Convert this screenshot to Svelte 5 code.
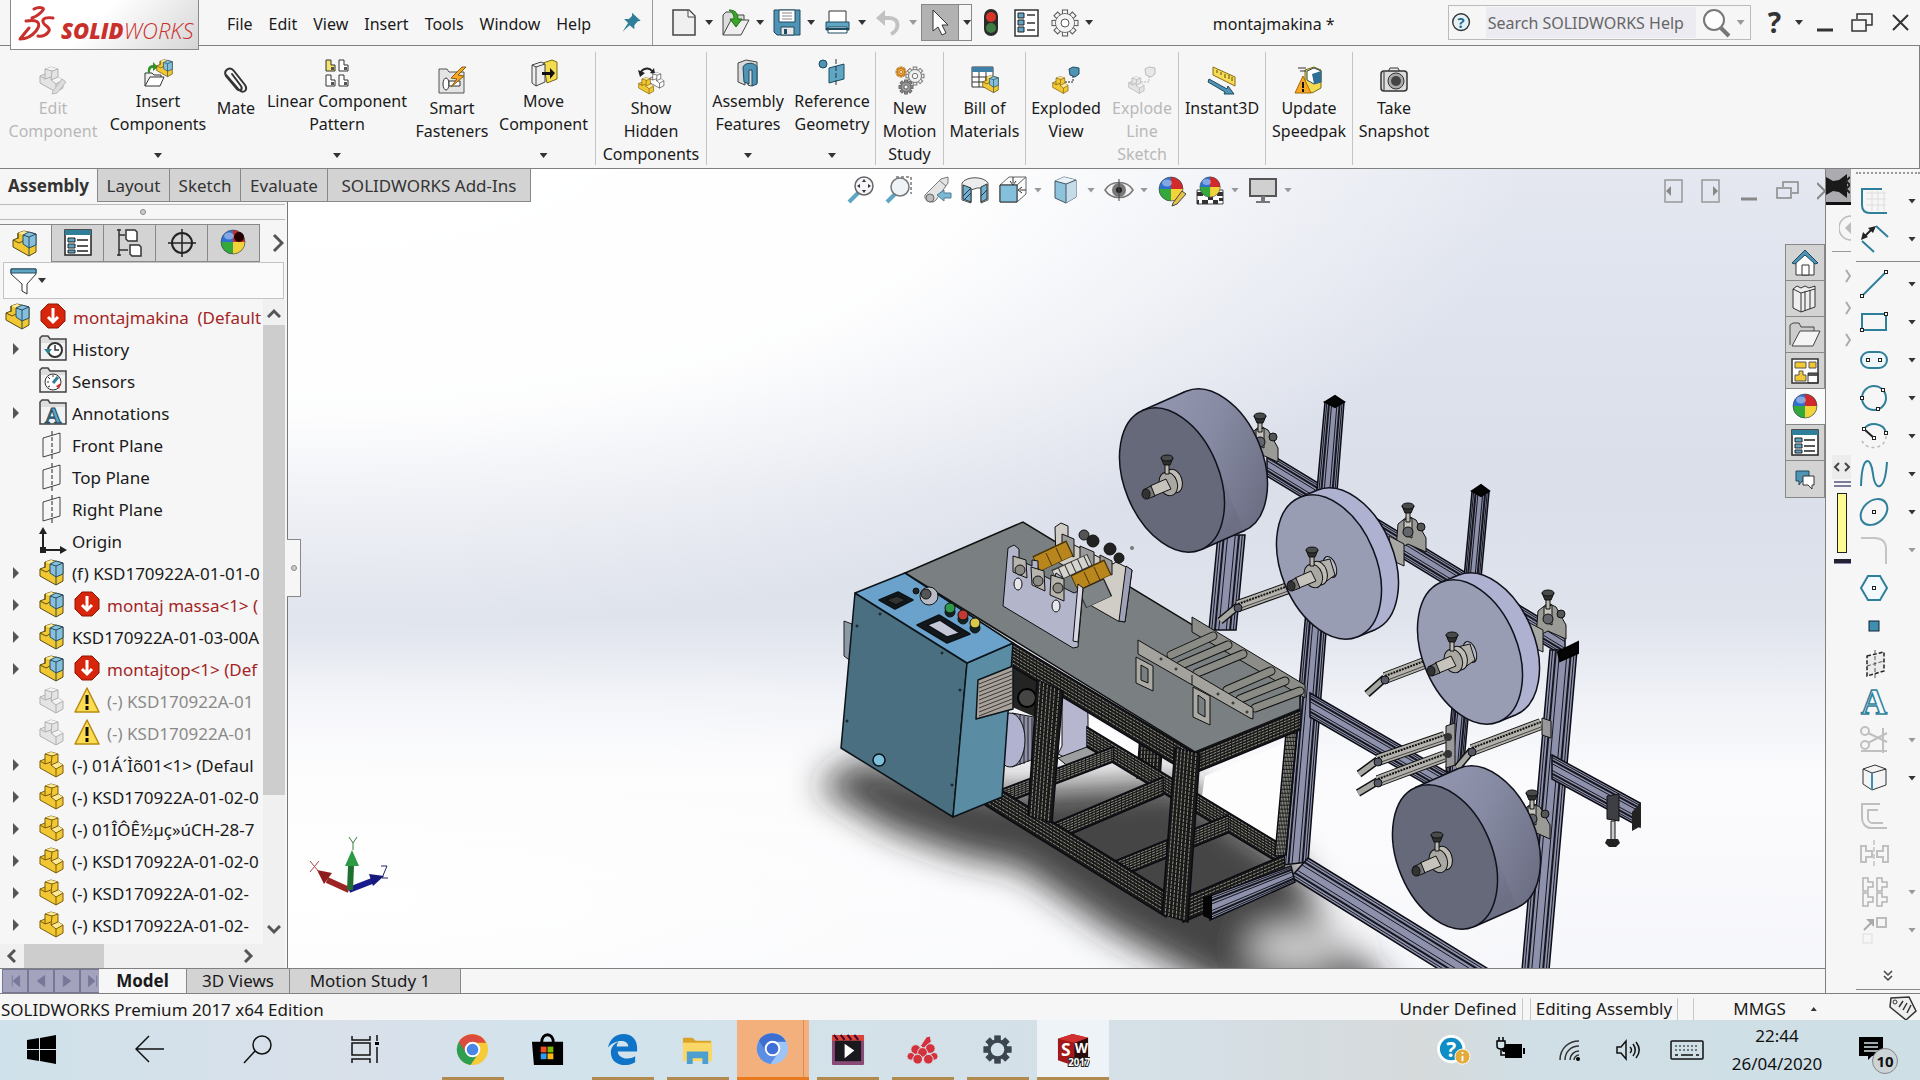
<script>
  const T = '#2f7f9b';
  const part = (m, l, s) =>
    `<path d="M1 10l5-2V3l6-2 7 2v8l5 3v8l-7 4L1 17z" fill="${m}" stroke="${s}" stroke-linejoin="round"/><path d="M6 3l6-2 7 2-6 2zM12 14l7-3 5 3-7 4z" fill="${l}"/><path d="M6 3l7 2 6-2M13 5l-1 9 5 4 7-4M17 18v8M12 14l7-3M1 10l5 3 6-2M6 8v5" fill="none" stroke="${s}"/>`;
  const partY = part('#f2c832', '#fdeb9a', '#7a5c10');
  const partG = part('#e4e4e4', '#f4f4f4', '#b0b0b0');
  const asm =
    `<path d="M1 10l5-2V3l6-2 12 3v18l-7 4L1 17z" fill="#f2c832" stroke="#5a4a10" stroke-linejoin="round"/><path d="M6 3l6-2 6 2-6 2z" fill="#fdeb9a"/><path d="M11 5l6-3 7 2v11l-7 3-6-4z" fill="#86bfdc" stroke="#264e63"/><path d="M11 5l6 2 7-3M17 7v11M17 18v8" fill="none" stroke="#264e63"/><path d="M1 10l6 3 4-2M6 3v6" fill="none" stroke="#5a4a10"/>`;
  const ball =
    `<circle cx="13" cy="13" r="12" fill="#2f6fd0"/><path d="M13 13V1a12 12 0 0 1 12 12z" fill="#d22a2a"/><path d="M13 13h12a12 12 0 0 1-12 12z" fill="#f2d33a"/><path d="M13 13v12A12 12 0 0 1 1 13z" fill="#35a83c"/><circle cx="13" cy="13" r="12" fill="none" stroke="#444" stroke-opacity=".6"/><ellipse cx="9" cy="7" rx="5" ry="3.500" fill="#fff" opacity=".4"/>`;
  const folder = `<path d="M1 25V3l2-2h6l2 3h16v21z" fill="#ddd" stroke="#444" stroke-width="1.500"/><path d="M2 8h24v16H2z" fill="#f2f2f2"/>`;
  const listBox = `<rect x="1" y="1" width="26" height="25" fill="#fff" stroke="#222" stroke-width="1.500"/><path d="M1 1h26v5H1z" fill="${T}"/><path d="M4 9h7v4H4zM4 15h7v4H4zM4 21h7v3H4z" fill="#5fa6c4" stroke="#222"/><path d="M13 11h11M13 17h11M13 22h11" stroke="#222" stroke-width="1.500"/>`;
  const gear = (cx, cy, r, f, s) => {
    let g = '';
    for (let i = 0; i < 8; i++) g += `<rect x="${cx - r * 0.2}" y="${cy - r}" width="${r * 0.4}" height="${r * 0.5}" fill="${f}" stroke="${s}" transform="rotate(${i * 45} ${cx} ${cy})"/>`;
    return g + `<circle cx="${cx}" cy="${cy}" r="${r * 0.72}" fill="${f}" stroke="${s}"/><circle cx="${cx}" cy="${cy}" r="${r * 0.3}" fill="#f6f6f6" stroke="${s}"/>`;
  };
  const stop = `<path d="M8 1h10l7 7v10l-7 7H8l-7-7V8z" fill="#d8260c" stroke="#8d1506"/><path d="M13 5v13M8 14l5 5 5-5" fill="none" stroke="#fff" stroke-width="3"/>`;
  const warn = `<path d="M13 1l12 24H1z" fill="#fbdc52" stroke="#b98a10" stroke-width="1.500" stroke-linejoin="round"/><path d="M13 8v9M13 19v4" stroke="#111" stroke-width="3"/>`;
  const plane = `<path d="M4 7l17-5v19L4 26z" fill="none" stroke="#444"/><path d="M13 0v28" stroke="#222" stroke-dasharray="4 2"/>`;
  const sq = (x, y) => `<rect x="${x - 1.5}" y="${y - 1.5}" width="3" height="3" fill="#fff" stroke="#222"/>`;
  const tee = (x, y, c) => `<path d="M${x} ${y}h5v4h5v5h-5v4h-5z" fill="none" stroke="${c}" stroke-width="1.500"/>`;

  const icons = {
    part: partY, partG, asm, ball, stop, warn, plane, listBox,
    pin: `<path d="M14 1l11 10-4 1-4 5 0 5-6-5-9 8 7-11-5-5h6l4-4z" fill="${T}"/>`,
    new: `<path d="M2 1h16l6 6v19H2z" fill="#f0f0f0" stroke="#444" stroke-width="1.500"/><path d="M17 1v7h7" fill="#fff" stroke="#444"/>`,
    open: `<path d="M1 26V6l3-3h7l2 3h9v5" fill="#ddd" stroke="#444"/><path d="M1 26L9 11h18L19 26z" fill="#eee" stroke="#444"/><path d="M7 1c7 0 9 4 9 9h4l-6 8-6-8h4c0-4-1-6-5-9z" fill="#3ba52b" stroke="#1f6a14"/>`,
    save: `<path d="M1 1h26v25H4l-3-3z" fill="#4f93b5" stroke="#1e4a60"/><path d="M6 1h16v12H6z" fill="#fff" stroke="#1e4a60"/><path d="M9 4h10M9 7h10M9 10h10" stroke="#888"/><path d="M8 18h13v8H8z" fill="#e8e8e8" stroke="#1e4a60"/><path d="M11 20h3v5h-3z" fill="#1e4a60"/>`,
    print: `<path d="M5 2h17v12H5z" fill="#fff" stroke="#333"/><path d="M2 13h23v8H2z" fill="#5fa6c4" stroke="#1e4a60"/><path d="M4 18h19v6H4z" fill="#fff" stroke="#1e4a60"/><path d="M2 20h23" stroke="#1e4a60" stroke-width="2"/>`,
    undo: `<path d="M4 9h10c12 0 10 13 2 16" fill="none" stroke="#c2c2c2" stroke-width="4"/><path d="M1 9l9-8v16z" fill="#c2c2c2"/>`,
    cursor: `<path d="M7 1v21l5-4 4 8 4-2-4-8h6z" fill="#fff" stroke="#333"/>`,
    light: `<rect x="7" y="0" width="14" height="27" rx="7" fill="#2b2b2b"/><circle cx="14" cy="8" r="5" fill="#d8352b"/><circle cx="14" cy="19" r="5" fill="#3f7d45"/>`,
    props: `<rect x="2" y="1" width="23" height="26" fill="#fff" stroke="#333" stroke-width="1.500"/><path d="M5 4h6v5H5zM5 11h6v5H5zM5 18h6v5H5z" fill="#5fa6c4" stroke="#222"/><path d="M14 6h8M14 14h8M14 21h8" stroke="#333" stroke-width="1.500"/>`,
    gear: gear(14, 14, 13, '#f4f4f4', '#555') + `<circle cx="14" cy="14" r="9" fill="#f4f4f4"/><circle cx="14" cy="14" r="4" fill="#fff" stroke="#555"/>`,
    help: `<circle cx="13" cy="13" r="9" fill="#e3f2f8" stroke="#333" stroke-width="1.500"/><text x="13" y="19" font-size="16" font-weight="700" text-anchor="middle" fill="#2a6a86">?</text>`,
    glass: `<circle cx="11" cy="11" r="10" fill="#fdfdfd" stroke="#777" stroke-width="2"/><path d="M18 19l8 8" stroke="#777" stroke-width="4"/>`,
    min: `<path d="M6 21h16" stroke="#333" stroke-width="3"/>`,
    restore: `<path d="M8 10V5h15v11h-6" fill="none" stroke="#333" stroke-width="1.500"/><path d="M3 11h14v11H3z" fill="none" stroke="#333" stroke-width="1.500"/>`,
    close: `<path d="M6 6l15 15M21 6L6 21" stroke="#333" stroke-width="2"/>`,
    editc: partG + `<path d="M14 25l9-12 4 3-9 11-5 1z" fill="#ddd" stroke="#bbb"/>`,
    insert: `<path d="M1 27V14h7l2 2h7v3" fill="#eee" stroke="#333"/><path d="M1 27l5-9h14l-4 9z" fill="#fff" stroke="#333"/><path d="M4 14C3 8 6 6 9 6V3l5 5-5 4V9c-2 0-3 1-3 5z" fill="#35912a"/><g transform="translate(12 0) scale(.68)">${asm}</g>`,
    mate: `<path d="M4 9l13 15c5 4 9 0 6-5L12 5C8 0 1 4 4 10l11 13c3 3 6 0 4-3L10 8" fill="none" stroke="#333" stroke-width="2" stroke-linecap="round"/>`,
    pattern: [[3, 1, '#f3e36b'], [16, 1, '#fff'], [3, 16, '#fff'], [16, 16, '#fff']].map(([x, y, c]) => `<path d="M${x} ${y}h5v5h4v6h-9z" fill="${c}" stroke="#333"/><path d="M${x + 5} ${y + 7}h3v3h-3z" fill="#555"/>`).join(''),
    smart: `<path d="M1 27V3h8l2 3h15v21z" fill="#e4e4e4" stroke="#555"/><ellipse cx="8" cy="18" rx="3" ry="6" fill="#fff" stroke="#333"/><path d="M11 15h11v5H11z" fill="#fff" stroke="#333"/><path d="M24 1l-11 11 6 1-6 8 13-11-6-1 8-8z" fill="#f7a823" stroke="#8a5a10"/>`,
    move: `<path d="M13 4l9-3 5 2v17l-10 4z" fill="#f2dc4f" stroke="#7a6a10"/><path d="M2 6l9-3 4 2v18l-9 4-4-3z" fill="#eee" stroke="#444"/><path d="M6 8l9-3M6 8v19M2 6l4 2" fill="none" stroke="#444"/><path d="M12 13h8V9l5 5-5 6v-4h-8z" fill="#111"/>`,
    show: `<path d="M3 8c2-6 9-7 12-3" fill="none" stroke="#222" stroke-width="2"/><path d="M1 4l2 7 5-4zM13 7l5 1-1-6z" fill="#222"/><g transform="translate(12 6) scale(.62)">${part('#fff', '#fff', '#333')}</g><g transform="translate(1 11) scale(.65)">${partY}</g>`,
    feat: `<path d="M4 4l8-3 11 2v21l-6 3-3-1V12h-3v14l-7-3z" fill="#dadada" stroke="#444"/><path d="M9 8c2-5 12-5 14 0v17l-5 2V11h-3v14l-5-2z" fill="#4f93b5" stroke="#1e4a60"/>`,
    refg: `<circle cx="5" cy="5" r="4" fill="#4f93b5" stroke="#1e4a60"/><path d="M11 9l15-4v15l-15 4z" fill="#5fa6c4" stroke="#1e4a60"/><path d="M18 0v28" stroke="#333" stroke-dasharray="5 2"/>`,
    motion: gear(5, 6, 5, '#f2a93b', '#c07a20') + gear(19, 10, 9, '#f0f0f0', '#777') + gear(10, 21, 7, '#999', '#666'),
    bom: `<path d="M1 1h21v20H1z" fill="#fff" stroke="#333"/><path d="M1 1h21v5H1z" fill="#3f7fa8"/><path d="M1 11h21M1 16h21M8 6v15M15 6v15" stroke="#333"/><g transform="translate(11 9) scale(.68)">${asm}</g>`,
    explode: `<path d="M13 16h8V9" fill="none" stroke="#222" stroke-dasharray="2 1"/><path d="M17 3l4-2 6 1v6l-4 3-5-2z" fill="#4f93b5" stroke="#1e4a60"/><g transform="translate(0 10) scale(.67)">${partY}</g>`,
    explodeG: `<path d="M13 16h8V9" fill="none" stroke="#bbb" stroke-dasharray="2 1"/><path d="M17 3l4-2 6 1v6l-4 3-5-2z" fill="#e8e8e8" stroke="#bbb"/><g transform="translate(0 10) scale(.67)">${partG}</g>`,
    instant: `<path d="M5 1l22 10v9L5 9z" fill="#f7dd55" stroke="#8a6a10"/><path d="M9 4v3M13 6v3M17 8v4M21 9v4M24 11v4" stroke="#5a4a10"/><path d="M1 13l18 10 1-3 6 8-10 0 1-2L0 16z" fill="#4f93b5" stroke="#1e4a60"/>`,
    speed: `<path d="M10 4l9-3 7 3v18l-9 5-7-4z" fill="#f3da52" stroke="#7a6a10"/><path d="M12 5l7-3 7 3v11l-7 2-7-4z" fill="#fff" stroke="#1e4a60"/><path d="M17 8l9-3v11l-7 2z" fill="#2f6f97"/><path d="M3 2h8M5 5h6" stroke="#333"/><path d="M8 10l8 17H0z" fill="#f9a825" stroke="#a66a08"/><path d="M8 16v6M8 23v3" stroke="#111" stroke-width="2"/>`,
    camera: `<path d="M8 6l2-4h8l2 4" fill="#eee" stroke="#333"/><rect x="1" y="5" width="26" height="20" rx="3" fill="#ddd" stroke="#333" stroke-width="1.500"/><circle cx="16" cy="15" r="8" fill="#aaa" stroke="#333"/><circle cx="16" cy="15" r="5" fill="#444"/><path d="M4 6v18" stroke="#333"/>`,
    zfit: `<path d="M11 17l-9 9" stroke="#5fa6c4" stroke-width="4"/><circle cx="17" cy="10" r="9" fill="#f6f6fa" stroke="#666" stroke-width="1.500"/><path d="M17 3l2 3h-4zM17 17l2-3h-4zM10 10l3-2v4zM24 10l-3-2v4z" fill="#333"/>`,
    zarea: `<path d="M11 1h15v17" fill="none" stroke="#333" stroke-dasharray="3 2"/><path d="M10 18l-8 8" stroke="#5fa6c4" stroke-width="4"/><circle cx="15" cy="11" r="9" fill="#eef3f8" stroke="#777" stroke-width="1.500"/>`,
    prev: `<path d="M2 19L18 3l7-2v6L13 24c-4 5-13 0-11-5z" fill="#e4e4e4" stroke="#777"/><path d="M17 5l6 5" stroke="#777"/><circle cx="7" cy="22" r="4" fill="#bbb" stroke="#666"/><path d="M14 19l7-5v3h7v5h-7v3z" fill="#7db8d3" stroke="#4a7f98"/>`,
    section: `<path d="M1 7c4-7 22-7 26 0v17l-7 3V12h-4l-6 2v13l-9-3z" fill="#ececec" stroke="#555"/><path d="M2 9l8 3v14l-8-3zM20 11l6-3v15l-6 3z" fill="#6fb1cf" stroke="#333"/><path d="M2 20l8-8M3 24l7-7M20 20l6-6" stroke="#235"/>`,
    orient: `<path d="M1 9h17v17H1zM1 9l9-8h17l-9 8M27 1v17l-9 8" fill="none" stroke="#666"/><path d="M1 9h17v17H1z" fill="#84bfdb" stroke="#333"/><path d="M14 1v6M11 5l3 4 3-4M27 14h-6M23 11l-4 3 4 3" fill="none" stroke="#333"/>`,
    style: `<path d="M3 5l9-4 12 3v17l-10 6-11-5z" fill="#8fc3db" stroke="#456"/><path d="M14 8l10-4v17l-10 6z" fill="#c4dce8"/><path d="M3 5l9-4 12 3-10 4z" fill="#eaf3f8"/><path d="M3 5l11 3v19M14 8l10-4" fill="none" stroke="#456"/>`,
    eye: `<path d="M0 14C6 4 22 4 28 14 22 24 6 24 0 14z" fill="#f4f4f4" stroke="#777" stroke-width="1.500"/><circle cx="14" cy="14" r="7" fill="#777"/><circle cx="14" cy="14" r="3" fill="#222"/><path d="M14 3v22" stroke="#444"/>`,
    ballPen: ball + `<path d="M15 27l9-12 4 3-9 10-5 2z" fill="#e8c34a" stroke="#444"/>`,
    scene: `<path d="M1 14h26v14H1z" fill="#fff" stroke="#444"/><path d="M1 16h6v4H1zM12 20h5v4h-5zM21 16h6v4h-6zM6 24h6v4H6zM17 24h5v4h-5zM1 24h2v4H1zM23 22h4v3h-4z" fill="#333"/><g transform="translate(3 0) scale(.85)">${ball}</g>`,
    monitor: `<path d="M1 3h26v17H1z" fill="#d0d0d0" stroke="#555" stroke-width="2"/><path d="M12 20h4v5h5v2H7v-2h5z" fill="#777"/>`,
    docL: `<path d="M6 3h17v22H6z" fill="none" stroke="#999" stroke-width="1.500"/><path d="M12 9v10l-5-5z" fill="#888"/>`,
    docR: `<path d="M5 3h17v22H5z" fill="none" stroke="#999" stroke-width="1.500"/><path d="M16 9v10l5-5z" fill="#888"/>`,
    minG: `<path d="M6 22h16" stroke="#888" stroke-width="3"/>`,
    restoreG: `<path d="M10 10V5h15v11h-6" fill="none" stroke="#888" stroke-width="1.500"/><path d="M4 11h14v10H4z" fill="none" stroke="#888" stroke-width="1.500"/>`,
    tree: `<path d="M3 0v27M3 6h6M3 21h9M1 1h4M1 26h4" stroke="#333" stroke-width="1.500"/><path d="M10 1h9l2 2v9H12l-2-2zM14 16h9l2 2v9H16l-2-2z" fill="#fff" stroke="#333" stroke-width="1.500"/>`,
    target: `<circle cx="14" cy="14" r="10" fill="none" stroke="#222" stroke-width="2"/><path d="M14 0v28M0 14h28" stroke="#222" stroke-width="1.500"/>`,
    render: ball + `<circle cx="19" cy="8" r="5" fill="#200"/>`,
    filter: `<path d="M1 2h25v5L17 17v10l-5-3v-7L1 7z" fill="#fff" stroke="#333"/><path d="M1 2h25v4H1z" fill="#5fa6c4" stroke="#1e4a60"/>`,
    history: folder + `<circle cx="16" cy="15" r="7" fill="#fff" stroke="#333" stroke-width="2"/><path d="M16 10v5h4" fill="none" stroke="#333" stroke-width="1.500"/><path d="M5 14h8l-4 5z" fill="${T}"/>`,
    sensors: folder + `<circle cx="14" cy="15" r="8" fill="#fff" stroke="#333"/><path d="M14 16l5-6" stroke="${T}" stroke-width="3"/><path d="M17 19l5-3-2 6z" fill="#c33"/><path d="M14 8v2M8 15h2M9 10l2 2M9 20l2-1" stroke="#333"/>`,
    annot: folder + `<text x="14" y="24" font-size="23" font-weight="700" font-family="Liberation Serif, serif" text-anchor="middle" fill="#5fa6c4" stroke="#1e4a60">A</text>`,
    origin: `<path d="M4 4v19h22" fill="none" stroke="#222" stroke-width="2"/><path d="M4 0l4 7H0zM28 23l-7-4v8zM1 20h6v6H1z" fill="#222"/>`,
    home: `<path d="M5 13v13h18V13L14 4z" fill="#fff" stroke="#333"/><path d="M1 14L14 1l13 13-3 1L14 6 4 15z" fill="#4f93b5" stroke="#1e4a60"/><path d="M11 16h7v10h-7z" fill="#fff" stroke="#333"/>`,
    books: `<path d="M2 4l4-3 4 2 4-2 4 2 6-2v21l-14 5-8-4z" fill="#eee" stroke="#333"/><path d="M2 4l8 4v19M10 8l14-4M14 6v20M19 5v19" fill="none" stroke="#333"/>`,
    folderO: `<path d="M-1 24V4l3-2h6l2 4h13v4" fill="#ccc" stroke="#444"/><path d="M1 25l8-15h20l-7 15z" fill="#f4f4f4" stroke="#444"/>`,
    palette: `<path d="M1 2h26v24H1z" fill="#fff" stroke="#333" stroke-width="1.500"/><path d="M4 5h11v6H4zM18 5h7v6h-7zM8 14h4v4h3v6H4v-6h4z" fill="#f2c832" stroke="#555"/><path d="M17 16h10v3H17z" fill="#555"/><path d="M17 16h10v10H17z" fill="none" stroke="#333"/>`,
    chat: `<path d="M5 6h13v10h-7l-3 4v-4H5z" fill="#4f93b5" stroke="#1e4a60"/><path d="M12 11h11v9h-2v4l-4-4h-5z" fill="#fff" stroke="#333"/>`,
    sk1: `<path d="M6 6h20M6 12h20M6 18h20M12 4v20M18 4v20M24 4v20" stroke="#ddd"/><path d="M22 2H2v16c0 6 4 8 8 8h17" fill="none" stroke="${T}" stroke-width="2"/>`,
    sk2: `<path d="M2 16l12 11M16 1l12 11" stroke="${T}" stroke-width="2"/><path d="M4 12L13 3" stroke="#222" stroke-width="2"/><path d="M1 15l2-8 5 5zM16 1l-8 2 5 5z" fill="#222"/>`,
    line: `<path d="M2 26L26 2" stroke="${T}" stroke-width="2"/>` + sq(2, 26) + sq(26, 2),
    rect: `<path d="M2 6h24v16H2z" fill="none" stroke="${T}" stroke-width="2"/>` + sq(2, 22) + sq(26, 6),
    slot: `<rect x="1" y="6" width="26" height="16" rx="8" fill="#eef6fa" stroke="${T}" stroke-width="2"/>` + sq(8, 14) + sq(20, 14),
    circ: `<circle cx="14" cy="14" r="12" fill="none" stroke="${T}" stroke-width="2"/>` + sq(2, 14) + sq(23, 6) + sq(18, 25),
    arc: `<path d="M4 7c6-8 20-6 22 4" fill="none" stroke="${T}" stroke-width="2"/><path d="M26 14c0 14-22 16-25 2" fill="none" stroke="#bbb" stroke-width="1.500" stroke-dasharray="3 3"/><path d="M4 7l10 9" stroke="#222" stroke-width="2"/>` + sq(4, 7) + sq(14, 16) + sq(26, 11),
    spline: `<path d="M1 26C2-6 11-4 13 14s12 18 14-12" fill="none" stroke="${T}" stroke-width="2"/>`,
    ell: `<ellipse cx="14" cy="14" rx="15" ry="11" transform="rotate(-42 14 14)" fill="none" stroke="${T}" stroke-width="2"/>` + sq(14, 14),
    fillet: `<path d="M1 2h13c9 0 12 5 12 11v15" fill="none" stroke="#c4c4c4" stroke-width="2"/>`,
    hex: `<path d="M8 2h12l7 12-7 12H8L1 14z" fill="#f2fafd" stroke="${T}" stroke-width="2"/>` + sq(14, 14),
    point: `<rect x="9" y="9" width="10" height="10" fill="#3f8fae" stroke="#123"/>`,
    cplane: `<path d="M7 6l17-4v19L7 26z" fill="#ececec" stroke="#222" stroke-width="1.500" stroke-dasharray="4 2"/><path d="M7 16l17-5M15 0v28" stroke="#555" stroke-dasharray="4 2"/>`,
    txt: `<text x="14" y="26" font-size="36" font-weight="700" font-family="Liberation Serif, serif" text-anchor="middle" fill="#f2fafd" stroke="${T}" stroke-width="1.500">A</text>`,
    trim: `<circle cx="5" cy="5" r="4" fill="none" stroke="#c0c0c0" stroke-width="2"/><circle cx="5" cy="19" r="4" fill="none" stroke="#c0c0c0" stroke-width="2"/><path d="M8 7l19 9M8 17L27 7M23 2v25M1 25h26" stroke="#c0c0c0" stroke-width="2"/>`,
    cube: `<path d="M3 5l12-4 11 4v16l-14 5-9-6z" fill="#f4f4f4" stroke="#333"/><path d="M3 5l9 4 14-4" fill="none" stroke="#333"/><path d="M12 9v17" stroke="#3f8fae" stroke-width="2"/>`,
    offset: `<path d="M20 2H2v14c0 6 4 10 9 10h16M18 8H8v8c0 3 2 5 4 5h11" fill="none" stroke="#c0c0c0" stroke-width="2"/>`,
    mirror: `<path d="M1 6h5v5h6v6H6v5H1zM28 6h-5v5h-6v6h6v5h5z" fill="none" stroke="#c0c0c0" stroke-width="2"/><path d="M14 0v28" stroke="#aaa" stroke-dasharray="5 2"/>`,
    array: tee(3, 0, '#b4b4b4') + tee(17, 0, '#b4b4b4') + tee(3, 15, '#b4b4b4') + tee(17, 15, '#b4b4b4'),
    movee: `<path d="M4 14L12 6" stroke="#aaa" stroke-width="2"/><path d="M14 3v8l-8-8z" fill="#aaa"/><path d="M17 2h9v9h-9z" fill="none" stroke="#bbb" stroke-width="2"/><path d="M3 18h9v9H3z" fill="none" stroke="#ddd"/>`,
    tag: `<path d="M3 3l18-1 7 14-10 9L2 12z" fill="#eee" stroke="#333" stroke-width="1.500"/><circle cx="7" cy="7" r="2" fill="none" stroke="#333"/><path d="M11 12l4-6M15 15l4-7M19 18l4-8" stroke="#333" stroke-width="1.500"/>`,
    windows: `<path d="M0 5l12-2v11H0zM13 3l16-3v14H13zM0 15h12v11L0 24zM13 15h16v14l-16-3z" fill="#000"/>`,
    back: `<path d="M29 14H1M14 1L1 14l13 13" fill="none" stroke="#111" stroke-width="1.500"/>`,
    find: `<circle cx="19" cy="10" r="9" fill="none" stroke="#111" stroke-width="1.500"/><path d="M12 16L1 28" stroke="#111" stroke-width="1.500"/>`,
    tview: `<path d="M1 1v4h18V1M1 28v-4h18v4M1 8h18v12H1zM26 0v6M26 12v16" fill="none" stroke="#111" stroke-width="1.500"/><path d="M24 7h4v3h-4z"/>`,
    chrome: `<circle cx="16" cy="16" r="16" fill="#f7cb38"/><path d="M2 8a16 16 0 0 0 12 24l8-12-6-4z" fill="#2f9e50"/><path d="M2 8a16 16 0 0 1 28 1H16l-6 11z" fill="#dd4b3e"/><circle cx="16" cy="16" r="7" fill="#4a86e8" stroke="#fff" stroke-width="2"/>`,
    chromium: `<circle cx="16" cy="16" r="16" fill="#9cc4f6"/><path d="M2 8a16 16 0 0 0 12 24l8-12-6-4z" fill="#5b8fe6"/><path d="M2 8a16 16 0 0 1 28 1H16l-6 11z" fill="#3c6fd0"/><circle cx="16" cy="16" r="7" fill="#3f6fd8" stroke="#fff" stroke-width="2"/>`,
    store: `<path d="M10 9c0-11 12-11 12 0" fill="none" stroke="#000" stroke-width="3"/><path d="M0 8h32v24H2z" fill="#000"/><path d="M9 13h6v6H9z" fill="#f04e23"/><path d="M16 13h6v6h-6z" fill="#7fb900"/><path d="M9 20h6v6H9z" fill="#2a9df4"/><path d="M16 20h6v6h-6z" fill="#fdb813"/>`,
    edge: `<path d="M1 14C3 5 9 0 17 0c9 0 14 6 14 14v4H11c1 8 12 9 18 5v6c-10 6-25 3-25-10 0-5 3-9 8-11-1 1-2 3-2 5h12c0-8-14-8-21 1z" fill="#0f74c8"/>`,
    explorer: `<path d="M1 4h10l3 3h16v5H1z" fill="#d9a32a"/><path d="M1 9h30v19H1z" fill="#fbd768"/><path d="M5 31V18h22v13h-6v-6H11v6z" fill="#4d9fd0"/>`,
    film: `<rect x="0" y="1" width="33" height="31" rx="1" fill="#8a4a78"/><path d="M0 1h33v6H0z" fill="#d8443a"/><path d="M2 1l4 5M9 1l4 5M16 1l4 5M23 1l4 5" stroke="#402" stroke-width="2"/><path d="M3 7h27v21H3z" fill="#1a1a1e"/><path d="M13 10l10 7-10 8z" fill="#fff"/>`,
    paw: `<g fill="#d4313c" stroke="#d4e2ea"><path d="M14 12l6-9 4-1 1 6-8 7z"/><circle cx="9" cy="16" r="5"/><circle cx="24" cy="15" r="5"/><circle cx="16" cy="19" r="5"/><circle cx="4" cy="23" r="4"/><circle cx="28" cy="23" r="4"/><circle cx="11" cy="26" r="5"/><circle cx="22" cy="26" r="5"/></g>`,
    cog: gear(16, 16, 14, '#3c4650', '#3c4650') + `<circle cx="16" cy="16" r="7" fill="#d4e2ea"/>`,
    sw: `<path d="M1 5L16 0l16 4v22l-14 7L1 27z" fill="#a31818"/><path d="M18 9l14-5v22l-14 7z" fill="#2a0c0c"/><path d="M1 5l17 4 14-5-16-4z" fill="#d03030"/><text x="9" y="23" font-size="18" font-weight="700" text-anchor="middle" fill="#fff">S</text><text x="25" y="20" font-size="14" font-weight="700" text-anchor="middle" fill="#fff">W</text><text x="23" y="33" font-size="10" font-weight="700" text-anchor="middle" fill="#fff" stroke="#222" stroke-width="2" paint-order="stroke">2017</text>`,
    qhelp: `<circle cx="14" cy="14" r="15" fill="#fff"/><circle cx="14" cy="14" r="12" fill="#0f8dc4"/><text x="14" y="22" font-size="22" font-weight="700" text-anchor="middle" fill="#fff">?</text><circle cx="26" cy="22" r="8" fill="#e2ab3a" stroke="#fff"/><path d="M26 17v2M26 21v6" stroke="#fff" stroke-width="2"/>`,
    battery: `<path d="M6 8h20v14H9V16H6z" fill="#000"/><path d="M27 12h2v6h-2z"/><path d="M1 5h8v5c0 4-8 4-8 0zM3 1v4M7 1v4M5 13v6h4" fill="#d4e2ea" stroke="#000" stroke-width="1.500"/>`,
    wifi: `<g fill="none" stroke="#333" stroke-width="1.500"><path d="M5 24C5 12 14 5 24 5M10 24c0-8 6-14 14-14M15 24c0-5 4-9 9-9M19 24c0-2 2-5 5-5"/></g><circle cx="23" cy="23" r="2"/>`,
    vol: `<path d="M3 11h4l5-6v18l-5-6H3z" fill="none" stroke="#111" stroke-width="1.500"/><path d="M16 11c2 2 2 4 0 6M19 8c3 4 3 8 0 12M22 6c4 5 4 11 0 16" fill="none" stroke="#111" stroke-width="1.500"/>`,
    keys: `<rect x="1" y="5" width="32" height="18" rx="1" fill="none" stroke="#111" stroke-width="1.500"/><path d="M5 10h24M5 14h24" stroke="#111" stroke-dasharray="2 2"/><path d="M5 19h3M11 19h12M26 19h3" stroke="#111" stroke-width="1.500"/>`,
    note: `<path d="M1 1h24v19H14l-4 4v-4H1z"/><path d="M6 7h14M6 11h14M6 15h14" stroke="#d4e2ea" stroke-width="1.500"/>`
  };

  const menus = ['File', 'Edit', 'View', 'Insert', 'Tools', 'Window', 'Help'];
  const quick = [['new', 1], ['open', 1], ['save', 1], ['print', 1], ['undo', 2]];
  const ribbon = [
    [
      { i: 'editc', t: ['Edit', 'Component'], w: 106, off: 1 },
      { i: 'insert', t: ['Insert', 'Components'], w: 104, a: 1 },
      { i: 'mate', t: ['Mate'], w: 52 },
      { i: 'pattern', t: ['Linear Component', 'Pattern'], w: 150, a: 1 },
      { i: 'smart', t: ['Smart', 'Fasteners'], w: 80 },
      { i: 'move', t: ['Move', 'Component'], w: 103, a: 1 }
    ],
    [{ i: 'show', t: ['Show', 'Hidden', 'Components'], w: 110 }],
    [{ i: 'feat', t: ['Assembly', 'Features'], w: 82, a: 1 }, { i: 'refg', t: ['Reference', 'Geometry'], w: 86, a: 1 }],
    [{ i: 'motion', t: ['New', 'Motion', 'Study'], w: 67 }],
    [{ i: 'bom', t: ['Bill of', 'Materials'], w: 81 }],
    [{ i: 'explode', t: ['Exploded', 'View'], w: 80 }, { i: 'explodeG', t: ['Explode', 'Line', 'Sketch'], w: 72, off: 1 }],
    [{ i: 'instant', t: ['Instant3D'], w: 86 }],
    [{ i: 'speed', t: ['Update', 'Speedpak'], w: 86 }],
    [{ i: 'camera', t: ['Take', 'Snapshot'], w: 82 }]
  ];
  const cmdTabs = [['Assembly', 98], ['Layout', 72], ['Sketch', 71], ['Evaluate', 87], ['SOLIDWORKS Add-Ins', 203]];
  const panelTabs = ['asm', 'listBox', 'tree', 'target', 'render'];
  const tree = [
    { i: 'history', t: 'History', a: 1 },
    { i: 'sensors', t: 'Sensors' },
    { i: 'annot', t: 'Annotations', a: 1 },
    { i: 'plane', t: 'Front Plane' },
    { i: 'plane', t: 'Top Plane' },
    { i: 'plane', t: 'Right Plane' },
    { i: 'origin', t: 'Origin' },
    { i: 'asm', t: '(f) KSD170922A-01-01-0', a: 1 },
    { i: 'asm', s: 'stop', t: 'montaj massa<1> (', a: 1, c: 'err' },
    { i: 'asm', t: 'KSD170922A-01-03-00A', a: 1 },
    { i: 'asm', s: 'stop', t: 'montajtop<1> (Def', a: 1, c: 'err' },
    { i: 'partG', s: 'warn', t: '(-) KSD170922A-01', c: 'dim' },
    { i: 'partG', s: 'warn', t: '(-) KSD170922A-01', c: 'dim' },
    { i: 'part', t: '(-) 01Á´Ìõ01<1> (Defaul', a: 1 },
    { i: 'part', t: '(-) KSD170922A-01-02-0', a: 1 },
    { i: 'part', t: '(-) 01ÎÔÊ½µç»úCH-28-7', a: 1 },
    { i: 'part', t: '(-) KSD170922A-01-02-0', a: 1 },
    { i: 'part', t: '(-) KSD170922A-01-02-', a: 1 },
    { i: 'part', t: '(-) KSD170922A-01-02-', a: 1 }
  ];
  const views = [['zfit'], ['zarea'], ['prev'], ['section'], ['orient', 1], ['style', 1], ['eye', 1], ['ballPen'], ['scene', 1], ['monitor', 1]];
  const pane = ['home', 'books', 'folderO', 'palette', 'ball', 'listBox', 'chat'];
  const sketch = [['line', 1], ['rect', 1], ['slot', 1], ['circ', 1], ['arc', 1], ['spline', 1], ['ell', 1], ['fillet', 2], ['hex'], ['point'], ['cplane'], ['txt'], ['trim', 2], ['cube', 1], ['offset'], ['mirror'], ['array', 2], ['movee', 2]];
  const nav = ['windows', 'back', 'find', 'tview'];
  const apps = [['chrome', 'run'], ['store', ''], ['edge', 'run'], ['explorer', 'run'], ['chromium', 'hot'], ['film', 'run'], ['paw', 'run'], ['cog', 'run'], ['sw', 'run cur']];

  // Aluminium profile: quad between edge (x1,y1)-(x2,y2) and the same edge shifted by (dx,dy)
  function beam(x1, y1, x2, y2, dx, dy, dark = false, ex = dx, ey = dy) {
    const fs = dark ? [0.12, 0.26, 0.4, 0.54, 0.68, 0.84] : [0.1, 0.22, 0.36, 0.64, 0.78, 0.9];
    return {
      pts: `${x1},${y1} ${x2},${y2} ${x2 + ex},${y2 + ey} ${x1 + dx},${y1 + dy}`,
      dark,
      lines: fs.map((f, i) => ({ x1: x1 + dx * f, y1: y1 + dy * f, x2: x2 + ex * f, y2: y2 + ey * f, w: !dark && (i === 1 || i === 4) ? 2 : 1 }))
    };
  }
  const rear = [
    beam(1218, 535, 1209, 630, 27, 0),
    beam(1267, 452, 1565, 633, 0, 24),
    beam(1325, 402, 1283, 865, 19, 0, false, 25, -3),
    beam(1472, 492, 1446, 772, 17, 0),
    beam(1310, 693, 1450, 774, 0, 24),
    beam(1550, 650, 1522, 970, 27, 0),
    beam(1552, 755, 1640, 803, 0, 24),
    beam(1308, 858, 1490, 970, -17, 19, false, -50, 0)
  ];
  const frame = [
    beam(1140, 735, 1137, 778, 23, 0, true),
    beam(1087, 727, 1284, 846, 0, 20, true),
    beam(1000, 790, 1113, 747, 0, 15, true),
    beam(1052, 824, 1163, 777, 0, 18, true),
    beam(1115, 861, 1228, 815, 0, 18, true),
    beam(1287, 722, 1275, 855, 11, 0, true),
    beam(1183, 898, 1284, 855, 0, 24, true),
    beam(985, 780, 1166, 892, 0, 25, true),
    beam(1013, 643, 1195, 753, 0, 24, true),
    beam(1195, 753, 1300, 710, 0, 20, true),
    beam(1037, 680, 1028, 815, 26, 12, true, 24, 8),
    beam(1175, 748, 1162, 914, 25, 6, true, 26, 8)
  ];
  const foot = beam(1210, 896, 1291, 866, 0, 24, false, 4, 16);
  const rollers = [[1213, 636, 1171, 655], [1228, 645, 1181, 665], [1243, 654, 1197, 673], [1271, 671, 1227, 690], [1285, 681, 1240, 699], [1300, 691, 1255, 708]];
  const arms = [[1238, 606, 1291, 587, 1220, 621], [1385, 678, 1427, 662, 1367, 694], [1378, 760, 1445, 737, 1359, 774], [1378, 781, 1445, 756, 1358, 793], [1472, 750, 1541, 724, 1457, 768]];
  const A = 75.5, B = 47.4, R = (-22.5 * Math.PI) / 180;
  function reel(cx, cy, dx, dy, face, side) {
    const u = [Math.cos(R), Math.sin(R)], v = [-Math.sin(R), Math.cos(R)];
    const n = [-dy, dx];
    const t = Math.atan2(A * (v[0] * n[0] + v[1] * n[1]), B * (u[0] * n[0] + u[1] * n[1]));
    const px = B * Math.cos(t) * u[0] + A * Math.sin(t) * v[0];
    const py = B * Math.cos(t) * u[1] + A * Math.sin(t) * v[1];
    return { cx, cy, dx, dy, face, side, px, py };
  }
  const reels = [
    { ...reel(1172, 480, 43, -19, '#666979', 'url(#drum)'), hx: 1168, hy: 483 },
    { ...reel(1329, 567, 17, -7, '#989db4', '#aeb1d0'), hx: 1313, hy: 575 },
    { ...reel(1470, 652, 17, -7, '#989db4', '#aeb1d0'), hx: 1453, hy: 660 },
    { ...reel(1445, 857, 43, -19, '#666979', 'url(#drum)'), hx: 1438, hy: 860 }
  ];
  const mounts = [[1260, 418], [1408, 508], [1548, 595], [1532, 795]];
</script>

{#snippet icon(name, size = 28)}
  <svg class="ic" width={size} height={size} viewBox="0 0 28 28" aria-hidden="true">{@html icons[name]}</svg>
{/snippet}
{#snippet caret(kind = 1)}
  <span class="caret" class:pale={kind === 2}></span>
{/snippet}
{#snippet profile(b)}
  <polygon points={b.pts} fill={b.dark ? '#191918' : '#8d91ab'} stroke="#0c0c14" stroke-width="1.500" />
  {#each b.lines as l}
    <line x1={l.x1} y1={l.y1} x2={l.x2} y2={l.y2} stroke={b.dark ? '#8f8f88' : '#16161f'} stroke-width={l.w} stroke-dasharray={b.dark ? '3 1' : 'none'} />
  {/each}
{/snippet}
{#snippet knob(x, y)}
  <path d="M{x - 2} {y}h4v14h-4z" fill="#bbb9b2" stroke="#111" />
  <path d="M{x - 6} {y - 2}l3 7h6l3-7z" fill="#2d302f" stroke="#111" />
  <ellipse cx={x} cy={y - 2} rx="6" ry="3" fill="#474b4a" stroke="#111" />
{/snippet}

<div class="app">
  <header class="title">
    <div class="logo">
      <svg width="38" height="38" viewBox="0 0 38 38" aria-hidden="true">
        <g fill="none" stroke="#c9302c" stroke-width="3" stroke-linecap="round" stroke-linejoin="round">
          <path d="M16 3c4-2 11-2 9 1s-6 6-11 8" />
          <path d="M8 15c12-2 16 2 10 10-4 5-10 8-16 8l9-11" />
          <path d="M35 12c-6-1-11 0-10 4s8 5 6 9-7 6-11 5" />
        </g>
      </svg>
      <span class="brand"><b>SOLID</b>WORKS</span>
    </div>
    <nav class="menus">
      {#each menus as m}<button>{m}</button>{/each}
    </nav>
    <button class="pin" aria-label="Pin menu">{@render icon('pin', 22)}</button>
    <div class="quick">
      {#each quick as [n, k]}
        <button aria-label={n}>{@render icon(n)}{@render caret(k)}</button>
      {/each}
      <button class="select" aria-label="Select"><span>{@render icon('cursor')}</span>{@render caret()}</button>
      <button class="solo" aria-label="Rebuild">{@render icon('light')}</button>
      <button class="solo" aria-label="File properties">{@render icon('props')}</button>
      <button aria-label="Options">{@render icon('gear')}{@render caret()}</button>
    </div>
    <span class="doc">montajmakina *</span>
    <div class="search">
      {@render icon('help', 26)}
      <input type="text" placeholder="Search SOLIDWORKS Help" aria-label="Search SOLIDWORKS Help" />
      {@render icon('glass')}{@render caret(2)}
    </div>
    <button class="q" aria-label="Help">?{@render caret()}</button>
    <div class="win">
      <button aria-label="Minimize">{@render icon('min')}</button>
      <button aria-label="Restore">{@render icon('restore')}</button>
      <button aria-label="Close">{@render icon('close')}</button>
    </div>
  </header>

  <section class="ribbon">
    {#each ribbon as g}
      <div class="group">
        {#each g as b}
          <button class="rb" class:drop={b.a} class:off={b.off} style:width="{b.w}px">
            {@render icon(b.i)}
            {#each b.t as line}<span>{line}</span>{/each}
            {#if b.a}<i>{@render caret()}</i>{/if}
          </button>
        {/each}
      </div>
    {/each}
  </section>

  <main>
    <div class="work">
      <svg class="scene" viewBox="288 169 1537 799" preserveAspectRatio="xMaxYMid slice" aria-label="montajmakina model">
        <defs>
          <linearGradient id="sky" x2="0" y2="1">
            <stop offset="0" stop-color="#eceef4" /><stop offset=".25" stop-color="#e0e4ee" /><stop offset=".45" stop-color="#dbdfea" /><stop offset=".57" stop-color="#dfe3ec" />
            <stop offset=".65" stop-color="#f0f2f7" /><stop offset=".72" stop-color="#fbfbfd" /><stop offset="1" stop-color="#f3f4f9" />
          </linearGradient>
          <radialGradient id="glow" gradientUnits="userSpaceOnUse" cx="330" cy="150" r="1200" gradientTransform="translate(0 90) scale(1 .4)">
            <stop offset="0" stop-color="#fff" /><stop offset=".55" stop-color="#fff" stop-opacity=".95" /><stop offset="1" stop-color="#fff" stop-opacity="0" />
          </radialGradient>
          <radialGradient id="low" gradientUnits="userSpaceOnUse" cx="330" cy="900" r="1300" gradientTransform="translate(0 720) scale(1 .2)">
            <stop offset="0" stop-color="#fff" /><stop offset="1" stop-color="#fff" stop-opacity="0" />
          </radialGradient>
          <linearGradient id="drum" x2=".6" y2="1"><stop offset="0" stop-color="#9498b1" /><stop offset=".5" stop-color="#868aa2" /><stop offset="1" stop-color="#6d7085" /></linearGradient>
          <filter id="soft" x="-30%" y="-30%" width="160%" height="160%"><feGaussianBlur stdDeviation="17" /></filter>
        </defs>
        <rect x="0" y="0" width="1920" height="1080" fill="url(#sky)" />
        <rect x="0" y="0" width="1920" height="1080" fill="url(#glow)" />
        <rect x="0" y="0" width="1920" height="1080" fill="url(#low)" />
        <g filter="url(#soft)">
          <path d="M815 785L860 760 1000 790 1180 780 1290 860 1330 930 1400 1000 1240 1000 1110 930 1020 868 960 855 890 830z" fill="#262626" opacity=".85" />
          <ellipse cx="1296" cy="948" rx="44" ry="18" fill="#fff" opacity=".8" />
        </g>
        <path d="M1084 712l55 34v12l-52-30zM1205 776l82-34-10 100-75-46z" fill="#fdfdfe" />
        {#each rear as b}{@render profile(b)}{/each}
        <path d="M1325 402l10-6 9 6-9 5zM1472 491l9-6 8 6-8 5zM1558 652l20-10v11l-18 8z" fill="#050505" stroke="#000" stroke-width="2" />
        <path d="M1632 812l9-10v24l-9 5z" fill="#222" />
        {#each mounts as [x, y]}
          <path d="M{x - 10} {y + 16}l10-8 8 4 10 18v14l-18-8-12 6z" fill="#9a9b97" stroke="#111" />
          <path d="M{x - 4} {y + 12}l8-2v20l-8-4z" fill="#c4c3bd" stroke="#111" />
          <ellipse cx={x + 13} cy={y + 19} rx="4" ry="4" fill="#555" stroke="#111" />
          <circle cx={x} cy={y + 24} r="5" fill="#63656c" stroke="#111" />
          {@render knob(x, y)}
        {/each}
        <path d="M1389 536l15 8v22l-13-6zM1528 622l15 8v22l-13-6z" fill="#a7a8a3" stroke="#111" />
        <path d="M1607 796l12-2v27l-12-2z" fill="#3d3f45" stroke="#111" /><path d="M1611 821h4v20h-4z" fill="#ccc" stroke="#111" />
        <path d="M1607 839h11l2 4-4 4h-7l-4-4z" fill="#222" />
        {#each arms as [x1, y1, x2, y2, tx, ty]}
          <line {x1} {y1} x2={tx} y2={ty} stroke="#111" stroke-width="8" /><line {x1} {y1} x2={tx} y2={ty} stroke="#a7a7a4" stroke-width="5" />
          <line {x1} {y1} {x2} {y2} stroke="#111" stroke-width="12" /><line {x1} {y1} {x2} {y2} stroke="#b3b1ab" stroke-width="10" />
          <line {x1} y1={y1 - 2} {x2} y2={y2 - 2} stroke="#111" stroke-width="2" stroke-dasharray="2 1" /><line {x1} y1={y1 + 3} {x2} y2={y2 + 3} stroke="#444" />
          <circle cx={x1} cy={y1 + 2} r="4" fill="#555a66" stroke="#111" />
        {/each}
        <path d="M1446 726l9-3v42l-9 3zM1542 718l9 3v17l-9-3z" fill="#999" stroke="#111" /><circle cx="1448" cy="737" r="4" fill="#333" /><circle cx="1448" cy="754" r="4" fill="#333" />
        {#each reels as r, n}
          <g stroke="#11111c" stroke-width="1.500">
            <ellipse cx={r.cx + r.dx} cy={r.cy + r.dy} rx={B} ry={A} transform="rotate(-22.5 {r.cx + r.dx} {r.cy + r.dy})" fill={r.side} />
            <polygon stroke="none" fill={r.side} points="{r.cx + r.px},{r.cy + r.py} {r.cx + r.px + r.dx},{r.cy + r.py + r.dy} {r.cx - r.px + r.dx},{r.cy - r.py + r.dy} {r.cx - r.px},{r.cy - r.py}" />
            <path d="M{r.cx + r.px} {r.cy + r.py}l{r.dx} {r.dy}M{r.cx - r.px} {r.cy - r.py}l{r.dx} {r.dy}" />
            <ellipse cx={r.cx} cy={r.cy} rx={B} ry={A} transform="rotate(-22.5 {r.cx} {r.cy})" fill={r.face} />
          </g>
          <g transform="translate({r.hx} {r.hy})" stroke="#111">
            {#if n === 1 || n === 2}
              <ellipse cx="17" cy="-8" rx="6" ry="11" transform="rotate(-20 17 -8)" fill="#b7bac9" /><path d="M0-12L17-16 22 0 4 13z" fill="#b3b1ab" />
            {/if}
            <ellipse cx="6" cy="-2" rx="8" ry="12" transform="rotate(-18 6 -2)" fill="#bfbdb6" />
            <ellipse cx="0" cy="1" rx="9" ry="12" transform="rotate(-18)" fill="#a9a8a2" />
            <path d="M-18 3L-2-4 3 6-14 13z" fill="#c5c3bc" /><path d="M-25 7l8-4 4 10-8 3z" fill="#777" />
            <ellipse cx="-22" cy="11" rx="4" ry="5" fill="#333" />
          </g>
          {@render knob(r.hx - 1, r.hy - 23)}
        {/each}

        <path d="M1062 692l12-4c10 4 14 14 14 30v20l8 6-30 14-8-4 4-8z" fill="#b6b7cf" stroke="#111" /><path d="M1058 758l42-16 18 8-48 18z" fill="#9b9d9e" stroke="#111" />
        <path d="M1012 713l22 4 6 22-6 20-22 8z" fill="#8e90a8" stroke="#111" /><path d="M1020 715v50M1024 716v48M1028 717v45M1032 718v42M1036 722v34" stroke="#222" />
        <ellipse cx="1010" cy="740" rx="15" ry="27" fill="#b0b2cf" stroke="#111" />
        <path d="M1010 665l30 14v40l-28-12z" fill="#242422" /><circle cx="1027" cy="698" r="9" fill="#454543" stroke="#000" stroke-width="2" />
        {#each frame as b}{@render profile(b)}{/each}
        {@render profile(foot)}
        <path d="M1203 897l9-2v25l-9-4z" fill="#050505" />
        <path d="M905 573l118-51 277 168v19l-105 43z" fill="#7a8081" stroke="#111" stroke-width="1.500" />

        <path d="M1192 617l113 68v13l-113-66z" fill="#8c8d89" stroke="#111" />
        {#each rollers as [x1, y1, x2, y2]}
          <line {x1} {y1} {x2} {y2} stroke="#111" stroke-width="9" stroke-linecap="round" /><line {x1} {y1} {x2} {y2} stroke="#8b8b86" stroke-width="7" stroke-linecap="round" />
        {/each}
        <path d="M1136 657l17 9v25l-17-8zm5 8v15l7 3v-14zM1193 687l17 9v29l-17-8zm5 8v18l7 4v-17z" fill="#aaa9a3" fill-rule="evenodd" stroke="#111" />
        <path d="M1138 640l115 68v11l-3-1-112-64z" fill="#a3a29d" stroke="#111" />
        <path d="M1192 675v10" stroke="#111" />
        <g fill="#ddd" stroke="#111"><circle cx="1161" cy="659" r="1" /><circle cx="1176" cy="669" r="1" /><circle cx="1218" cy="694" r="1" /><circle cx="1233" cy="703" r="1" /><circle cx="1247" cy="712" r="1" /></g>

        <g stroke="#111">
          <path d="M1055 527l6-4 7 3v16l45 22 3-2 16 8-7 52-7-1-28-16 3-22-37-22z" fill="#cfcdc6" />
          <path d="M1125 622l7-52-6-4-7 55z" fill="#9fa1b8" />
          <path d="M1062 534l12 5v18l-12-6zM1080 546l14 6v14l-14-6zM1100 555l12 6v14l-12-4z" fill="#999" />
          <circle cx="1084" cy="535" r="5" fill="#555" /><circle cx="1093" cy="541" r="6" fill="#222" /><circle cx="1110" cy="549" r="6" fill="#222" /><circle cx="1119" cy="558" r="5" fill="#222" />
        </g>
        <g stroke-linecap="butt">
          <path d="M1082 599l26-12" stroke="#222" stroke-width="20" /><path d="M1083 599l24-11" stroke="#7f8487" stroke-width="18" />
          <path d="M1036 564l34-16M1074 583l34-16" stroke="#4a3508" stroke-width="17" /><path d="M1037 564l32-15M1075 583l32-15" stroke="#b8861d" stroke-width="15" />
          <path d="M1054 576l36-16" stroke="#333" stroke-width="13" /><path d="M1055 576l34-16" stroke="#d4d3ce" stroke-width="11" stroke-dasharray="6 1" />
        </g>
        <path d="M1046 553l6 13M1056 548l6 13M1084 572l6 13M1094 567l6 13" stroke="#4a3508" fill="none" />
        <g stroke="#111">
          <path d="M1008 548l6-3 5 4v11l13 6v-6l6 1v12l16 8 2-8 6 4v10l12 6 9-4-5 58-5 1-70-42z" fill="#b3b5cb" />
          <path d="M1083 588l-5 54-5-1 5-57z" fill="#d7d8e4" />
          <path d="M1013 556l13 4 1 18-14-6zM1031 567l13 4 1 20-13-6zM1051 575l13 4v22l-14-6z" fill="#b6b4ad" />
          <circle cx="1020" cy="570" r="5" fill="#8d8b85" /><circle cx="1038" cy="581" r="5" fill="#8d8b85" /><circle cx="1058" cy="588" r="5" fill="#8d8b85" />
          <ellipse cx="1018" cy="584" rx="4" ry="6" fill="#e6e6ea" /><ellipse cx="1056" cy="606" rx="4" ry="6" fill="#e6e6ea" />
        </g>
        <circle cx="1132" cy="548" r="2" fill="#777" />

        <path d="M844 621l8 3v38l-8-6z" fill="#8b9aa4" stroke="#222" />
        <g stroke="#0c1318" stroke-width="1.500" stroke-linejoin="round">
          <path d="M855 593l112 70-14 154-112-69z" fill="#4a6f80" />
          <path d="M967 663l46-20-11 154-49 20z" fill="#5a8ca3" />
          <path d="M855 593l50-20 108 70-46 20z" fill="#6aa2cc" />
          <path d="M978 680l35-14v43l-37 10z" fill="#a8a29b" />
          <path d="M879 600l19-8 15 8-18 9z" fill="#15181b" /><path d="M886 600l11-4 9 4-10 5z" fill="#333" />
          <path d="M917 625l22-10 31 19-23 9z" fill="#15181b" />
          <path d="M927 625l13-5 20 13-13 4z" fill="#c5c7d6" />
          <circle cx="879" cy="760" r="6" fill="#7ec0da" />
        </g>
        {#each [0, 1, 2, 3, 4, 5, 6, 7, 8] as i}<path d="M979 {684 + i * 4}l33-13" stroke="#3a3735" />{/each}
        <g stroke="#111"><circle cx="929" cy="596" r="9" fill="#b9bcc6" /><circle cx="926" cy="594" r="5" fill="#555" /><circle cx="916" cy="591" r="3" fill="#222" />
          <circle cx="950" cy="612" r="5" fill="#122" /><circle cx="950" cy="608" r="5" fill="#2f9a4a" /><circle cx="963" cy="619" r="5" fill="#122" /><circle cx="963" cy="615" r="5" fill="#c03a2f" /><circle cx="975" cy="628" r="5" fill="#122" /><circle cx="975" cy="623" r="5" fill="#d8c74a" />
        </g>
        <g fill="none" stroke="#0c1318"><circle cx="880" cy="614" r="1" /><circle cx="857" cy="626" r="1" /><circle cx="847" cy="721" r="1" /><circle cx="942" cy="653" r="1" /><circle cx="960" cy="690" r="1" /><circle cx="952" cy="785" r="1" /></g>

        <g stroke-width="6"><path d="M349 890l-22-10" stroke="#9c2424" /><path d="M349 890l23-9" stroke="#191c8c" /><path d="M350 890l1-24" stroke="#1f7030" /></g>
        <path d="M317 870l15 3-8 11z" fill="#8e1c1c" /><path d="M384 876l-15-2 4 12z" fill="#16187c" /><path d="M352 850l7 16h-14z" fill="#2d9a45" />
        <g fill="none"><path d="M310 861l9 11M319 861l-9 11" stroke="#b04646" /><path d="M349 837l4 6 4-6M353 843v7" stroke="#3a7a3a" /><path d="M381 866h6l-5 12h6" stroke="#22246c" /></g>
      </svg>

      <div class="tabs">
        {#each cmdTabs as [t, w], i}<button class:active={i === 0} style:width="{w}px">{t}</button>{/each}
      </div>
      <div class="heads">
        {#each views as [n, c]}<button aria-label={n}>{@render icon(n)}{#if c}{@render caret(2)}{/if}</button>{/each}
      </div>
      <div class="docwin">
        {#each ['docL', 'docR', 'minG', 'restoreG'] as n}<button aria-label={n}>{@render icon(n)}</button>{/each}
        <button class="cut" aria-label="Close document"><svg width="8" height="20" viewBox="0 0 8 20"><path d="M0 2l8 8-8 8" fill="none" stroke="#888" stroke-width="2" /></svg></button>
      </div>
      <div class="pane">
        {#each pane as n}<button class:active={n === 'ball'} aria-label={n}>{@render icon(n)}</button>{/each}
      </div>

      <aside>
        <div class="split"><i></i></div>
        <div class="ptabs">
          {#each panelTabs as n, i}<button class:active={i === 0} aria-label={n}>{@render icon(n)}</button>{/each}
          <span class="more"><svg width="12" height="20" viewBox="0 0 12 20"><path d="M2 2l8 8-8 8" fill="none" stroke="#555" stroke-width="3" /></svg></span>
        </div>
        <button class="filter" aria-label="Filter">{@render icon('filter')}{@render caret()}</button>
        <div class="body">
          <ul>
            <li class="root err">{@render icon('asm')}{@render icon('stop')}<span>montajmakina&nbsp; (Default</span></li>
            {#each tree as n}
              <li class={n.c}>
                <b class:has={n.a}></b>{@render icon(n.i)}{#if n.s}{@render icon(n.s)}{/if}<span>{n.t}</span>
              </li>
            {/each}
          </ul>
          <div class="vbar">
            <svg width="14" height="10" viewBox="0 0 14 10"><path d="M1 9l6-6 6 6" fill="none" stroke="#555" stroke-width="3" /></svg>
            <i></i>
            <svg width="14" height="10" viewBox="0 0 14 10"><path d="M1 1l6 6 6-6" fill="none" stroke="#555" stroke-width="3" /></svg>
          </div>
        </div>
        <div class="hbar">
          <svg width="10" height="14" viewBox="0 0 10 14"><path d="M9 1L3 7l6 6" fill="none" stroke="#555" stroke-width="3" /></svg>
          <i></i>
          <svg width="10" height="14" viewBox="0 0 10 14"><path d="M1 1l6 6-6 6" fill="none" stroke="#555" stroke-width="3" /></svg>
        </div>
        <div class="handle"><i></i></div>
      </aside>

      <div class="bottom">
        <div class="steps">
          {#each ['M9 6v12M17 6v12l-7-6z', 'M16 6v12l-8-6z', 'M8 6v12l8-6z', 'M7 6v12l7-6zM16 6v12'] as d}
            <button aria-label="Scroll tabs"><svg width="24" height="22" viewBox="0 0 24 24"><path {d} fill="#77779a" stroke="#77779a" /></svg></button>
          {/each}
        </div>
        <button class="mt active">Model</button>
        <button class="mt three">3D Views</button>
        <button class="mt study">Motion Study 1</button>
      </div>
    </div>

    <div class="right">
      <div class="strip">
        <div class="cap"><svg width="24" height="34" viewBox="0 0 24 34"><path d="M0 8l7 4 6-1 8-6v24l-8-6-6-1-7 4z" fill="#1a1a1a" /><path d="M24 8l-4 4 4 4-4 4 4 4" fill="none" stroke="#222" stroke-width="2" /></svg></div>
        <svg class="ring" width="12" height="26" viewBox="0 0 12 26"><path d="M12 1a12 12 0 0 0 0 24" fill="none" stroke="#bbb" stroke-width="1.500" /><path d="M12 7v12l-6-6z" fill="#bbb" /></svg>
        <hr />
        {#each [1, 2, 3] as _}<svg class="chv" width="6" height="14" viewBox="0 0 6 14"><path d="M1 1l4 6-4 6" fill="none" stroke="#aaa" stroke-width="2" /></svg>{/each}
        <div class="ang"><svg width="18" height="10" viewBox="0 0 18 10"><path d="M6 1L2 5l4 4M12 1l4 4-4 4" fill="none" stroke="#444" stroke-width="2" /></svg></div>
        <div class="bars"></div>
        <div class="yellow"></div>
        <div class="zig"></div>
      </div>
      <div class="tools">
        <button aria-label="Sketch">{@render icon('sk1')}{@render caret()}</button>
        <button aria-label="Smart dimension">{@render icon('sk2')}{@render caret()}</button>
        <hr />
        {#each sketch as [n, c]}<button aria-label={n}>{@render icon(n)}{#if c}{@render caret(c)}{/if}</button>{/each}
        <button class="exp" aria-label="More tools"><svg width="10" height="12" viewBox="0 0 10 12"><path d="M1 1l4 4 4-4M1 6l4 4 4-4" fill="none" stroke="#444" stroke-width="1.500" /></svg></button>
      </div>
    </div>
  </main>

  <footer class="status">
    <span class="grow">SOLIDWORKS Premium 2017 x64 Edition</span>
    <span class="cell ud">Under Defined</span>
    <span class="cell ea">Editing Assembly</span>
    <span class="cell un">MMGS<i class="up"></i></span>
    {@render icon('tag')}
  </footer>

  <div class="taskbar">
    <div class="nav">
      {#each nav as n}<button aria-label={n}><svg width="30" height="30" viewBox="0 0 30 30">{@html icons[n]}</svg></button>{/each}
    </div>
    <div class="apps">
      {#each apps as [n, c]}<button class={c} aria-label={n}><svg width="34" height="34" viewBox="-1 -1 35 35">{@html icons[n]}</svg></button>{/each}
    </div>
    <div class="tray">
      <button aria-label="Get help"><svg width="36" height="32" viewBox="-2 -2 38 34">{@html icons.qhelp}</svg></button>
      <button aria-label="Battery">{@render icon('battery')}</button>
      <button class="wide" aria-label="Wi-Fi">{@render icon('wifi')}</button>
      <button aria-label="Volume">{@render icon('vol')}</button>
      <button class="wide" aria-label="Keyboard"><svg width="34" height="28" viewBox="0 0 34 28">{@html icons.keys}</svg></button>
      <button class="clock"><span>22:44</span><span>26/04/2020</span></button>
      <button class="notes" aria-label="Notifications">{@render icon('note')}<em>10</em></button>
    </div>
  </div>
</div>

<style>
  :global(body) { margin: 0; overflow: hidden; }
  .app { display: flex; flex-direction: column; height: 100vh; background: #f6f6f6; color: #1a1a1a; font: 16px/23px 'Noto Sans', 'Open Sans', sans-serif; }
  .app :global(*) { box-sizing: border-box; }
  button { border: 0; background: none; padding: 0; margin: 0; font: inherit; color: inherit; display: flex; align-items: center; justify-content: center; white-space: nowrap; }
  .ic { flex: none; overflow: visible; display: block; }
  .caret { flex: none; width: 8px; height: 5px; background: #333; clip-path: polygon(0 0, 100% 0, 50% 100%); }
  .caret.pale { background: #999; }

  .title { display: flex; align-items: center; height: 46px; border-bottom: 1px solid #808080; flex: none; }
  .logo { align-self: flex-start; flex: none; position: relative; z-index: 2; display: flex; align-items: center; gap: 5px; width: 189px; height: 50px; margin-left: 10px; padding-left: 7px; border: 1px solid #8a8a8a; border-top: 0; background: linear-gradient(135deg, #fff 45%, #d6d6d6); }
  .brand { color: #c9302c; font: italic 300 22px/24px 'Open Sans', 'Noto Sans', sans-serif; padding-top: 10px; }
  .brand b { font-weight: 800; }
  .menus { display: flex; gap: 16px; margin-left: 28px; padding-top: 3px; }
  .pin { margin-left: 30px; width: 22px; }
  .quick { display: flex; align-items: center; height: 100%; margin-left: 9px; padding-left: 16px; border-left: 1px solid #999; }
  .quick button { gap: 6px; width: 51px; height: 38px; justify-content: flex-start; padding-left: 2px; }
  .quick .solo { width: 36px; padding: 0; }
  .quick .select { width: 51px; height: 37px; padding: 0; gap: 4px; border: 1px solid #888; margin: 0 5px 0 -3px; }
  .select span:first-child { background: #b2b2b2; height: 100%; width: 37px; display: flex; align-items: center; justify-content: center; border-right: 1px solid #888; }
  .doc { margin-left: auto; padding-top: 3px; margin-right: 113px; }
  .search { display: flex; align-items: center; width: 303px; height: 35px; border: 1px solid #bbb; padding: 0 5px 0 0; flex: none; }
  .search input { flex: 1; min-width: 0; height: 31px; margin: 0 7px 0 11px; border: 0; background: #ebebf1; padding: 0 2px; font: inherit; }
  .search input::placeholder { color: #666; opacity: 1; }
  .search .caret { margin-left: 6px; }
  .q { font-size: 28px; font-weight: 700; color: #333; gap: 14px; margin-left: 17px; }
  .win { display: flex; gap: 10px; margin: 0 5px 0 8px; }

  .ribbon { display: flex; height: 123px; border-bottom: 1px solid #808080; border-right: 1px solid #808080; flex: none; }
  .group { display: flex; position: relative; border-right: 1px solid #c4c4c4; margin: 6px 0 3px; }
  .group:last-child { border: 0; }
  .rb { flex-direction: column; justify-content: flex-start; padding-top: 14px; flex: none; }
  .rb .ic { margin-bottom: 3px; }
  .rb.drop { padding-top: 7px; }
  .rb i { margin-top: 17px; display: flex; }
  .rb.off { color: #b9b9b9; }

  main { flex: 1; display: flex; min-height: 0; }
  .work { flex: 1; min-width: 0; position: relative; display: grid; grid-template: 33px 1fr 26px / 288px 1fr; }
  .scene { position: absolute; left: 288px; top: 0; width: calc(100% - 288px); height: calc(100% - 26px); }
  .tabs { grid-column: 1 / -1; display: flex; position: relative; font-size: 17px; }
  .tabs::before { content: ''; position: absolute; inset: 0 auto 0 0; width: 532px; background: #fff; }
  .tabs button { position: relative; background: #d3d3d3; border: 1px solid #888; border-left: 0; border-top: 0; color: #333; }
  .tabs button.active { background: #f6f6f6; font-weight: 700; border-bottom: 0; }
  .heads { position: absolute; left: 847px; top: 7px; display: flex; }
  .heads button { gap: 7px; margin-right: 10px; }
  .docwin { position: absolute; right: 0; top: 8px; display: flex; gap: 10px; }
  .docwin .cut { width: 8px; margin-left: 6px; }
  .pane { position: absolute; right: 0; top: 75px; width: 40px; border: 1px solid #888; border-right: 0; }
  .pane button { width: 100%; height: 36px; background: #d3d3d3; border-bottom: 1px solid #888; border-right: 1px solid #888; }
  .pane button:last-child { border-bottom: 0; }
  .pane .active { background: #fafafa; border-right: 0; }

  aside { grid-row: 2; position: relative; display: flex; flex-direction: column; background: #f6f6f6; border-right: 1px solid #777; min-height: 0; }
  .split { height: 16px; border: solid #bbb; border-width: 1px 0; margin-right: 2px; display: flex; align-items: center; justify-content: center; margin-top: 2px; flex: none; }
  .split i, .handle i { width: 6px; height: 6px; border: 1px solid #888; border-radius: 50%; background: #ccc; }
  .ptabs { display: flex; height: 38px; margin-top: 4px; flex: none; }
  .ptabs button { width: 52px; background: #d3d3d3; border: 1px solid #888; border-left: 0; }
  .ptabs .active { background: #f6f6f6; border-bottom: 0; }
  .more { display: flex; align-items: center; padding-left: 12px; }
  .filter { height: 37px; flex: none; margin: 0 3px; justify-content: flex-start; padding-left: 6px; border: 1px solid #c4c4c4; background: #fafafa; }
  .body { flex: 1; display: flex; min-height: 0; }
  ul { flex: 1; min-width: 0; margin: 0; padding: 2px 0 0; list-style: none; overflow: hidden; font-size: 17px; }
  li { display: flex; align-items: center; height: 32px; white-space: nowrap; }
  li b { width: 39px; flex: none; }
  li b.has::before { content: ''; display: block; width: 6px; height: 12px; margin-left: 13px; background: #555; clip-path: polygon(0 0, 100% 50%, 0 100%); }
  li .ic { margin-right: 7px; }
  li span { margin-left: -2px; }
  li.root { padding-left: 5px; }
  .err { color: #a32525; }
  .dim { color: #8a8a8a; }
  .vbar { width: 22px; margin-right: 2px; background: #f0f0f0; display: flex; flex-direction: column; align-items: center; padding: 9px 0; }
  .vbar i { width: 22px; margin: 7px 0 auto; background: #cdcdcd; flex: 0 0 75%; }
  .hbar { height: 24px; margin-right: 2px; background: #f0f0f0; display: flex; align-items: center; padding: 0 31px 0 6px; flex: none; }
  .hbar i { width: 80px; height: 100%; background: #cdcdcd; margin: 0 auto 0 8px; }
  .handle { position: absolute; left: 287px; top: 337px; width: 14px; height: 58px; border: 1px solid #888; border-left: 0; background: #f6f6f6; display: flex; align-items: center; justify-content: center; }

  .bottom { grid-column: 1 / -1; display: flex; background: #f6f6f6; border: solid #808080; border-width: 1px 0; font-size: 17px; position: relative; }
  .steps { display: flex; width: 97px; margin-left: 2px; background: #a3a3bd; }
  .steps button { flex: 1; border: 1px solid #77779a; }
  .mt { border-right: 1px solid #888; background: #d3d3d3; padding-bottom: 2px; }
  .mt.active { width: 88px; background: #f6f6f6; font-weight: 700; }
  .mt.three { width: 103px; }
  .mt.study { width: 171px; padding-right: 10px; }

  .right { display: flex; width: 95px; flex: none; border-left: 1px solid #808080; border-bottom: 1px solid #808080; }
  .strip { width: 25px; display: flex; flex-direction: column; align-items: flex-end; }
  .cap { width: 25px; height: 36px; background: #ababb0; border-bottom: 3px solid #111; flex: none; }
  .ring { margin: 10px 0; }
  .strip hr { width: 19px; margin: 0 0 17px; border: 0; border-top: 1px solid #999; }
  .chv { margin-bottom: 18px; }
  .ang { margin-top: 90px; width: 19px; height: 24px; background: #ececec; display: flex; align-items: center; justify-content: center; }
  .bars { width: 17px; height: 6px; border: solid #7c7c9a; border-width: 2px 0; margin: 2px 0 6px; }
  .yellow { width: 10px; height: 60px; margin-right: 4px; background: #fdfb92; border: 1px solid #222; }
  .zig { width: 17px; height: 5px; margin-top: 6px; background: #223; border-bottom: 1px solid #88a; }
  .tools { flex: 1; margin-left: 5px; padding-top: 13px; display: flex; flex-direction: column; position: relative; border-bottom: 1px solid #888; margin-bottom: 3px; }
  .tools::before { content: ''; position: absolute; top: 3px; left: 0; right: 0; border-top: 2px dotted #999; }
  .tools button { height: 38px; justify-content: flex-start; padding-left: 4px; gap: 20px; flex: none; }
  .tools hr { width: 100%; margin: 3px 0; border: 0; border-top: 1px solid #888; }
  .tools .exp { justify-content: center; padding: 0; height: 54px; }

  .status { display: flex; align-items: center; height: 26px; flex: none; font-size: 17px; padding: 4px 4px 0 0; overflow: hidden; }
  .grow { flex: 1; padding-left: 1px; }
  .cell { text-align: center; border-right: 1px solid #c8c8c8; height: 22px; line-height: 22px; }
  .ud { width: 131px; padding-left: 2px; }
  .ea { width: 148px; margin-left: 7px; border-left: 1px solid #c8c8c8; }
  .un { display: flex; align-items: center; justify-content: center; gap: 25px; width: 187px; margin-left: 15px; border: 0; border-left: 1px solid #c8c8c8; padding-right: 24px; margin-right: 8px; }
  .up { width: 6px; height: 4px; background: #333; clip-path: polygon(50% 0, 100% 100%, 0 100%); }

  .taskbar { display: flex; height: 60px; flex: none; background: linear-gradient(90deg, #cfe1ea, #d9e0ea 18%, #d2e3ec 30%, #d5dfe6 62%, #d6dadb 74%, #d0dfe6 80%, #cfdfe6); color: #111; }
  .nav { display: flex; gap: 48px; padding-left: 12px; }
  .nav button { width: 60px; }
  .apps { display: flex; gap: 3px; margin-left: 41px; }
  .apps button { width: 72px; position: relative; }
  .apps .run::after { content: ''; position: absolute; left: 5px; right: 5px; bottom: 0; height: 3px; background: #b18a50; }
  .apps .hot { background: #f4b07c; border-bottom: 3px solid #e8791e; }
  .apps .hot::before { content: ''; position: absolute; right: 5px; top: 0; bottom: 0; border-right: 1px solid #d98e50; }
  .apps .cur { background: #edf3f6; }
  .apps .cur::after { left: 0; right: 0; }
  .tray { display: flex; margin-left: auto; padding-right: 4px; font-size: 17px; }
  .tray button { width: 56px; }
  .tray .wide { width: 62px; }
  .tray .clock { width: 118px; flex-direction: column; line-height: 28px; }
  .tray .notes { width: 80px; padding-right: 8px; position: relative; }
  .notes em { position: absolute; right: 18px; bottom: 6px; width: 26px; height: 26px; border-radius: 50%; border: 1px solid #888; background: #ccd4d8; font: 700 15px/24px 'Noto Sans', sans-serif; }
</style>
